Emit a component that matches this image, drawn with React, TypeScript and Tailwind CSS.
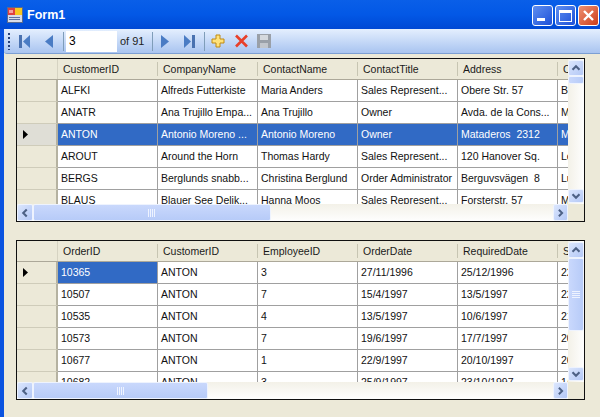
import React from "react";

type Col = string[];

const topHead: Col = ["CustomerID", "CompanyName", "ContactName", "ContactTitle", "Address", "City"];
const topRows: Col[] = [
  ["ALFKI", "Alfreds Futterkiste", "Maria Anders", "Sales Represent...", "Obere Str. 57", "Berlin"],
  ["ANATR", "Ana Trujillo Empa...", "Ana Trujillo", "Owner", "Avda. de la Cons...", "México"],
  ["ANTON", "Antonio Moreno ...", "Antonio Moreno", "Owner", "Mataderos  2312", "México"],
  ["AROUT", "Around the Horn", "Thomas Hardy", "Sales Represent...", "120 Hanover Sq.", "London"],
  ["BERGS", "Berglunds snabb...", "Christina Berglund", "Order Administrator", "Berguvsvägen  8", "Luleå"],
  ["BLAUS", "Blauer See Delik...", "Hanna Moos", "Sales Represent...", "Forsterstr. 57", "Mannheim"],
];
const botHead: Col = ["OrderID", "CustomerID", "EmployeeID", "OrderDate", "RequiredDate", "ShippedDate"];
const botRows: Col[] = [
  ["10365", "ANTON", "3", "27/11/1996", "25/12/1996", "22/12/1996"],
  ["10507", "ANTON", "7", "15/4/1997", "13/5/1997", "22/4/1997"],
  ["10535", "ANTON", "4", "13/5/1997", "10/6/1997", "21/5/1997"],
  ["10573", "ANTON", "7", "19/6/1997", "17/7/1997", "20/6/1997"],
  ["10677", "ANTON", "1", "22/9/1997", "20/10/1997", "26/9/1997"],
  ["10682", "ANTON", "3", "25/9/1997", "23/10/1997", "1/10/1997"],
];

function ScrollBtn({ dir, className = "" }: { dir: "up" | "down" | "left" | "right"; className?: string }) {
  const pts = {
    up: "4,10 8,6 12,10",
    down: "4,6 8,10 12,6",
    left: "10,4 6,8 10,12",
    right: "6,4 10,8 6,12",
  }[dir];
  return (
    <div className={"flex items-center justify-center shrink-0 rounded-[2px] border border-[#eef3fe] bg-gradient-to-br from-[#dbe6fd] to-[#b4c8f6] " + className}>
      <svg width="14" height="14" viewBox="0 0 16 16">
        <polyline points={pts} fill="none" stroke="#4d6185" strokeWidth="2.4" />
      </svg>
    </div>
  );
}

function Grip({ vertical }: { vertical?: boolean }) {
  return (
    <svg width="8" height="8" viewBox="0 0 8 8">
      {[0, 2, 4, 6].map((p) =>
        vertical ? (
          <rect key={p} x={p} y="0" width="1" height="8" fill="#eef3ff" />
        ) : (
          <rect key={p} x="0" y={p} width="8" height="1" fill="#eef3ff" />
        )
      )}
    </svg>
  );
}

function Marker() {
  return (
    <svg width="5" height="9" viewBox="0 0 5 9">
      <polygon points="0,0 5,4.5 0,9" fill="#000" />
    </svg>
  );
}

function DataGrid({
  head,
  rows,
  currentRow,
  selAll,
  outer,
  vThumb,
  hThumb,
}: {
  head: Col;
  rows: Col[];
  currentRow: number;
  selAll: boolean;
  outer: string;
  vThumb: string;
  hThumb: string;
}) {
  return (
    <div className={"ml-[12px] w-[569px] shrink-0 border border-[#101010] bg-[#ece9d8] flex flex-col overflow-hidden " + outer}>
      <div className="flex flex-1 min-h-0">
        <div className="w-[551px] overflow-hidden bg-white">
          <div className="flex h-[21px] bg-[#ece9d8] border-b border-[#aca899]">
            <div className="w-[41px] shrink-0 border-r border-[#d6d3c2]" />
            {head.map((h) => (
              <div key={h} className="w-[100px] shrink-0 flex items-center pl-[5px] pt-px relative whitespace-nowrap text-[#1a1a1a]">
                {h}
                <span className="absolute right-0 top-[3px] h-[14px] w-px bg-[#c7c5b2]" />
              </div>
            ))}
          </div>
          {rows.map((r, ri) => {
            const cur = ri === currentRow;
            return (
              <div key={ri} className="flex h-[22px]">
                <div className={"w-[41px] shrink-0 flex items-center pl-[6px] border-b border-b-[#cfccba] border-r-2 border-r-[#b5b2a1] " + (cur && !selAll ? "bg-[#dfded6]" : "bg-[#ece9d8]")}>
                  {cur && <Marker />}
                </div>
                {r.map((c, ci) => {
                  const sel = cur && (!selAll || ci === 0);
                  return (
                    <div
                      key={ci}
                      className={
                        "w-[100px] shrink-0 flex items-center pl-[3px] border-r border-b border-[#a0a0a0] whitespace-pre overflow-hidden " +
                        (sel ? "bg-[#316ac5] text-white" : "bg-white text-[#111]")
                      }
                    >
                      {c}
                    </div>
                  );
                })}
              </div>
            );
          })}
        </div>
        <div className="w-[16px] flex flex-col bg-gradient-to-r from-[#f3f1e8] to-[#fefefe]">
          <ScrollBtn dir="up" className="h-[16px] mt-px" />
          <div className={"shrink-0 rounded-[2px] border border-[#eef3fe] bg-gradient-to-r from-[#c9d8fc] to-[#b7cbf8] flex items-center justify-center " + vThumb}>
            {vThumb.includes("73") && <Grip />}
          </div>
          <div className="flex-1" />
          <ScrollBtn dir="down" className="h-[14px] mb-px" />
        </div>
      </div>
      <div className="flex h-[17px] shrink-0">
        <div className="w-[551px] flex bg-gradient-to-b from-[#f3f1e8] to-[#fefefe]">
          <ScrollBtn dir="left" className="w-[16px]" />
          <div className={"rounded-[2px] border border-[#eef3fe] bg-gradient-to-b from-[#c9d8fc] to-[#b7cbf8] flex items-center justify-center " + hThumb}>
            <Grip vertical />
          </div>
          <div className="flex-1" />
          <ScrollBtn dir="right" className="w-[15px]" />
        </div>
      </div>
    </div>
  );
}

function Sep({ className = "" }: { className?: string }) {
  return <div className={"w-px h-[19px] bg-[#7f9db9] shrink-0 " + className} />;
}

export default function App() {
  return (
    <div className="w-[600px] h-[417px] overflow-hidden bg-[#ece9d8] flex flex-col font-['Liberation_Sans',Arial,sans-serif] text-[10.5px] text-black">
      <div className="h-[29px] shrink-0 flex items-center bg-gradient-to-b from-[#0a5fe8] via-[#0358e6] to-[#0048d4] relative">
        <svg className="ml-[7px]" width="16" height="16" viewBox="0 0 16 16">
          <rect x="0.5" y="0.5" width="15" height="15" fill="#d8dce8" stroke="#5a6a90" />
          <rect x="1" y="1" width="7" height="7" fill="#e04040" />
          <rect x="8" y="1" width="7" height="7" fill="#f8c820" />
          <rect x="2" y="3" width="4" height="3" fill="#f4a0a0" />
          <rect x="2" y="10" width="11" height="1" fill="#6070a0" />
          <rect x="2" y="12" width="11" height="1" fill="#6070a0" />
        </svg>
        <span className="ml-[4px] mt-[1px] text-white font-bold text-[12.5px] leading-none">Form1</span>
        <div className="ml-auto mr-px flex gap-[2px] mt-[2px]">
          <div className="w-[21px] h-[21px] rounded-[3px] border border-white bg-gradient-to-br from-[#5f8ef0] to-[#1e4fd8] flex items-end pl-[4px] pb-[4px]">
            <div className="w-[8px] h-[3px] bg-white" />
          </div>
          <div className="w-[21px] h-[21px] rounded-[3px] border border-white bg-gradient-to-br from-[#5f8ef0] to-[#1e4fd8] flex items-center justify-center">
            <div className="w-[13px] h-[12px] border border-white border-t-[3px]" />
          </div>
          <div className="w-[21px] h-[21px] rounded-[3px] border border-white bg-gradient-to-br from-[#ee9070] to-[#cc3a14] flex items-center justify-center">
            <svg width="13" height="13" viewBox="0 0 13 13">
              <path d="M2 2 L11 11 M11 2 L2 11" stroke="#fff" strokeWidth="2.4" />
            </svg>
          </div>
        </div>
      </div>
      <div className="flex-1 min-h-0 flex flex-col border-l-[4px] border-[#0a53e0]">
        <div className="h-[25px] shrink-0 flex items-center rounded-bl-[3px] bg-gradient-to-b from-[#e4effe] to-[#a9c4f0] border-b border-[#7c9fd3]">
          <div className="ml-[4px] w-[2px] h-[17px] shrink-0 bg-[repeating-linear-gradient(to_bottom,#27417a_0,#27417a_2px,transparent_2px,transparent_4px)]" />
          <svg className="ml-[9px] shrink-0" width="11" height="13" viewBox="0 0 11 13">
            <rect x="0" y="0" width="3" height="13" fill="#4a72b0" />
            <polygon points="11,0 11,13 4,6.5" fill="#4a7cc4" />
          </svg>
          <svg className="ml-[15px] shrink-0" width="8" height="13" viewBox="0 0 8 13">
            <polygon points="8,0 8,13 0,6.5" fill="#4a7cc4" />
          </svg>
          <Sep className="ml-[10px]" />
          <div className="ml-[2px] w-[51px] h-[21px] bg-white shrink-0 flex items-center pl-[3px] text-[12px]">3</div>
          <span className="ml-[3px] w-[24px] shrink-0 whitespace-nowrap text-[11px] text-[#222]">of 91</span>
          <Sep className="ml-[8px]" />
          <svg className="ml-[8px] shrink-0" width="8" height="13" viewBox="0 0 8 13">
            <polygon points="0,0 0,13 8,6.5" fill="#4a7cc4" />
          </svg>
          <svg className="ml-[15px] shrink-0" width="11" height="13" viewBox="0 0 11 13">
            <polygon points="0,0 0,13 7,6.5" fill="#4a7cc4" />
            <rect x="8" y="0" width="3" height="13" fill="#4a72b0" />
          </svg>
          <Sep className="ml-[9px]" />
          <svg className="ml-[6px] shrink-0" width="14" height="14" viewBox="0 0 14 14">
            <path d="M5 1 H9 V5 H13 V9 H9 V13 H5 V9 H1 V5 H5 Z" fill="#ffe27a" stroke="#c08a10" />
          </svg>
          <svg className="ml-[9px] shrink-0" width="15" height="14" viewBox="0 0 15 14">
            <path d="M2 1.5 L13 12.5 M13 1.5 L2 12.5" stroke="#e8402a" strokeWidth="2.6" />
          </svg>
          <svg className="ml-[8px] shrink-0" width="14" height="14" viewBox="0 0 14 14">
            <rect x="0" y="0" width="14" height="14" fill="#9aa0a8" />
            <rect x="3" y="1" width="8" height="5" fill="#d5d9de" />
            <rect x="3" y="9" width="8" height="5" fill="#c2c6cc" />
          </svg>
        </div>
        <DataGrid
          head={topHead}
          rows={topRows}
          currentRow={2}
          selAll={false}
          outer="mt-[4px] h-[164px]"
          vThumb="h-[8px]"
          hThumb="w-[238px]"
        />
        <DataGrid
          head={botHead}
          rows={botRows}
          currentRow={0}
          selAll={true}
          outer="mt-[18px] h-[160px]"
          vThumb="h-[73px]"
          hThumb="w-[175px]"
        />
      </div>
    </div>
  );
}
